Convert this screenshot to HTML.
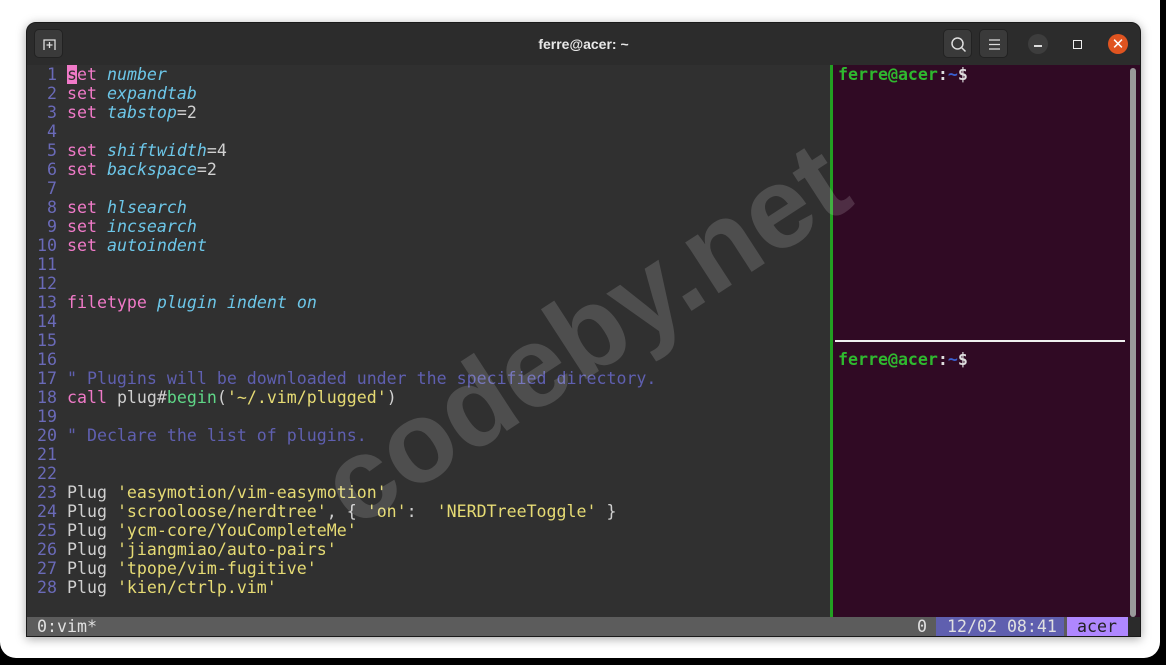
<!DOCTYPE html>
<html><head><meta charset="utf-8"><style>
*{margin:0;padding:0;box-sizing:border-box}
html,body{width:1166px;height:665px;overflow:hidden;background:#000}
.card{position:absolute;left:0;top:0;width:1160px;height:658px;background:#fff;border-radius:0 0 16px 16px}
.win{position:absolute;left:26px;top:22px;width:1115px;height:615px;background:#2b2b2b;border-radius:10px 10px 0 0;box-shadow:0 2px 10px rgba(0,0,0,.35);overflow:hidden;border:1px solid #1a1a1a}
.title{position:absolute;left:0;top:0;width:100%;height:42px;background:#2c2c2c;color:#e8e8e8;font:bold 14px "Liberation Sans",sans-serif;text-align:center;line-height:42px}
.btn{position:absolute;top:6px;width:29px;height:29px;background:#3a3a3a;border-radius:5px;border:1px solid #222}
.vim{position:absolute;left:0;top:42px;width:803px;height:552px;background:#303030}
.term{position:absolute;left:803px;top:42px;width:312px;height:552px;background:#300a24}
.mono{font-family:"DejaVu Sans Mono","Liberation Mono",monospace;font-size:16.6px;white-space:pre}
.code{position:absolute;left:10px;top:0px;line-height:19px;color:#d0d0d0}
.n{color:#6a6ab8}.k{color:#f07ac8}.o{color:#6cc6e8;font-style:italic}.c{color:#5f5fb0}.s{color:#e6db74}.g{color:#5fd787}
.status{position:absolute;left:0;top:594px;width:1101px;height:20px;background:#5c5c5c;color:#e0e0e0;line-height:20px}
.wm{position:absolute;left:258px;top:245px;font:bold 115px "Liberation Sans",sans-serif;color:rgba(255,255,255,.15);transform:rotate(-33deg);transform-origin:center;white-space:nowrap}
</style></head><body>
<div class="card"></div>
<div class="win">
 <div class="title">ferre@acer: ~</div>
 <div class="btn" style="left:7px"><svg width="29" height="29"><path d="M9 20V10h11v10" stroke="#ddd" stroke-width="1.3" fill="none"/><path d="M14.5 12v6M11.5 15h6" stroke="#ddd" stroke-width="1.3"/></svg></div>
 <div class="btn" style="left:916px"><svg width="29" height="29"><circle cx="13.5" cy="13.5" r="5.5" stroke="#ddd" stroke-width="1.5" fill="none"/><path d="M17.5 17.5l4 4" stroke="#ddd" stroke-width="1.5"/></svg></div>
 <div class="btn" style="left:952px"><svg width="29" height="29"><path d="M9 10h11M9 14.5h11M9 19h11" stroke="#ddd" stroke-width="1.3"/></svg></div>
 <div style="position:absolute;left:1001px;top:11px;width:20px;height:20px;border-radius:50%;background:#3d3d3d"><div style="position:absolute;left:6px;top:11px;width:8px;height:1.5px;background:#ddd"></div></div>
 <div style="position:absolute;left:1046px;top:17px;width:9px;height:9px;border:1.5px solid #eee"></div>
 <div style="position:absolute;left:1081px;top:11px;width:20px;height:20px;border-radius:50%;background:#e05420;color:#fff;font:15px 'DejaVu Sans',sans-serif;text-align:center;line-height:20px">✕</div>
 <div class="vim"><div class="code mono"><span class="n"> 1 </span><span class="k"><span style="background:#f07ac8;color:#303030">s</span>et</span> <span class="o">number</span>
<span class="n"> 2 </span><span class="k">set</span> <span class="o">expandtab</span>
<span class="n"> 3 </span><span class="k">set</span> <span class="o">tabstop</span>=2
<span class="n"> 4 </span>
<span class="n"> 5 </span><span class="k">set</span> <span class="o">shiftwidth</span>=4
<span class="n"> 6 </span><span class="k">set</span> <span class="o">backspace</span>=2
<span class="n"> 7 </span>
<span class="n"> 8 </span><span class="k">set</span> <span class="o">hlsearch</span>
<span class="n"> 9 </span><span class="k">set</span> <span class="o">incsearch</span>
<span class="n">10 </span><span class="k">set</span> <span class="o">autoindent</span>
<span class="n">11 </span>
<span class="n">12 </span>
<span class="n">13 </span><span class="k">filetype</span> <span class="o">plugin</span> <span class="o">indent</span> <span class="o">on</span>
<span class="n">14 </span>
<span class="n">15 </span>
<span class="n">16 </span>
<span class="n">17 </span><span class="c">" Plugins will be downloaded under the specified directory.</span>
<span class="n">18 </span><span class="k">call</span> plug#<span class="g">begin</span>(<span class="s">'~/.vim/plugged'</span>)
<span class="n">19 </span>
<span class="n">20 </span><span class="c">" Declare the list of plugins.</span>
<span class="n">21 </span>
<span class="n">22 </span>
<span class="n">23 </span>Plug <span class="s">'easymotion/vim-easymotion'</span>
<span class="n">24 </span>Plug <span class="s">'scrooloose/nerdtree'</span>, { <span class="s">'on'</span>:  <span class="s">'NERDTreeToggle'</span> }
<span class="n">25 </span>Plug <span class="s">'ycm-core/YouCompleteMe'</span>
<span class="n">26 </span>Plug <span class="s">'jiangmiao/auto-pairs'</span>
<span class="n">27 </span>Plug <span class="s">'tpope/vim-fugitive'</span>
<span class="n">28 </span>Plug <span class="s">'kien/ctrlp.vim'</span>
<span>                                                               </span>
<span>                                                             1,1       Наверху</span></div></div>
 <div class="term">
  <div style="position:absolute;left:0;top:0;width:3px;height:552px;background:#22a022"></div>
  <div style="position:absolute;left:5px;top:275px;width:290px;height:2px;background:#f0f0f0"></div>
  <div style="position:absolute;left:300px;top:3px;width:6px;height:549px;background:#9a9a9a;border-radius:3px"></div>
  <div class="mono" style="position:absolute;left:8px;top:0px;line-height:19px;font-weight:bold"><span style="color:#2fb82f">ferre@acer</span><span style="color:#ddd">:</span><span style="color:#3a5fd0">~</span><span style="color:#ddd">$</span></div>
  <div class="mono" style="position:absolute;left:8px;top:285px;line-height:19px;font-weight:bold"><span style="color:#2fb82f">ferre@acer</span><span style="color:#ddd">:</span><span style="color:#3a5fd0">~</span><span style="color:#ddd">$</span></div>
 </div>
 <div class="status mono"><span style="position:absolute;left:10px">0:vim*</span><span style="position:absolute;left:890px">0</span><span style="position:absolute;left:909px;width:128px;background:#5f5faf;padding-left:11px;height:20px">12/02 08:41</span><span style="position:absolute;left:1040px;width:61px;background:#af87ff;color:#222;padding-left:10px;height:20px">acer</span></div>
 <div class="wm">codeby.net</div>
</div>
</body></html>
